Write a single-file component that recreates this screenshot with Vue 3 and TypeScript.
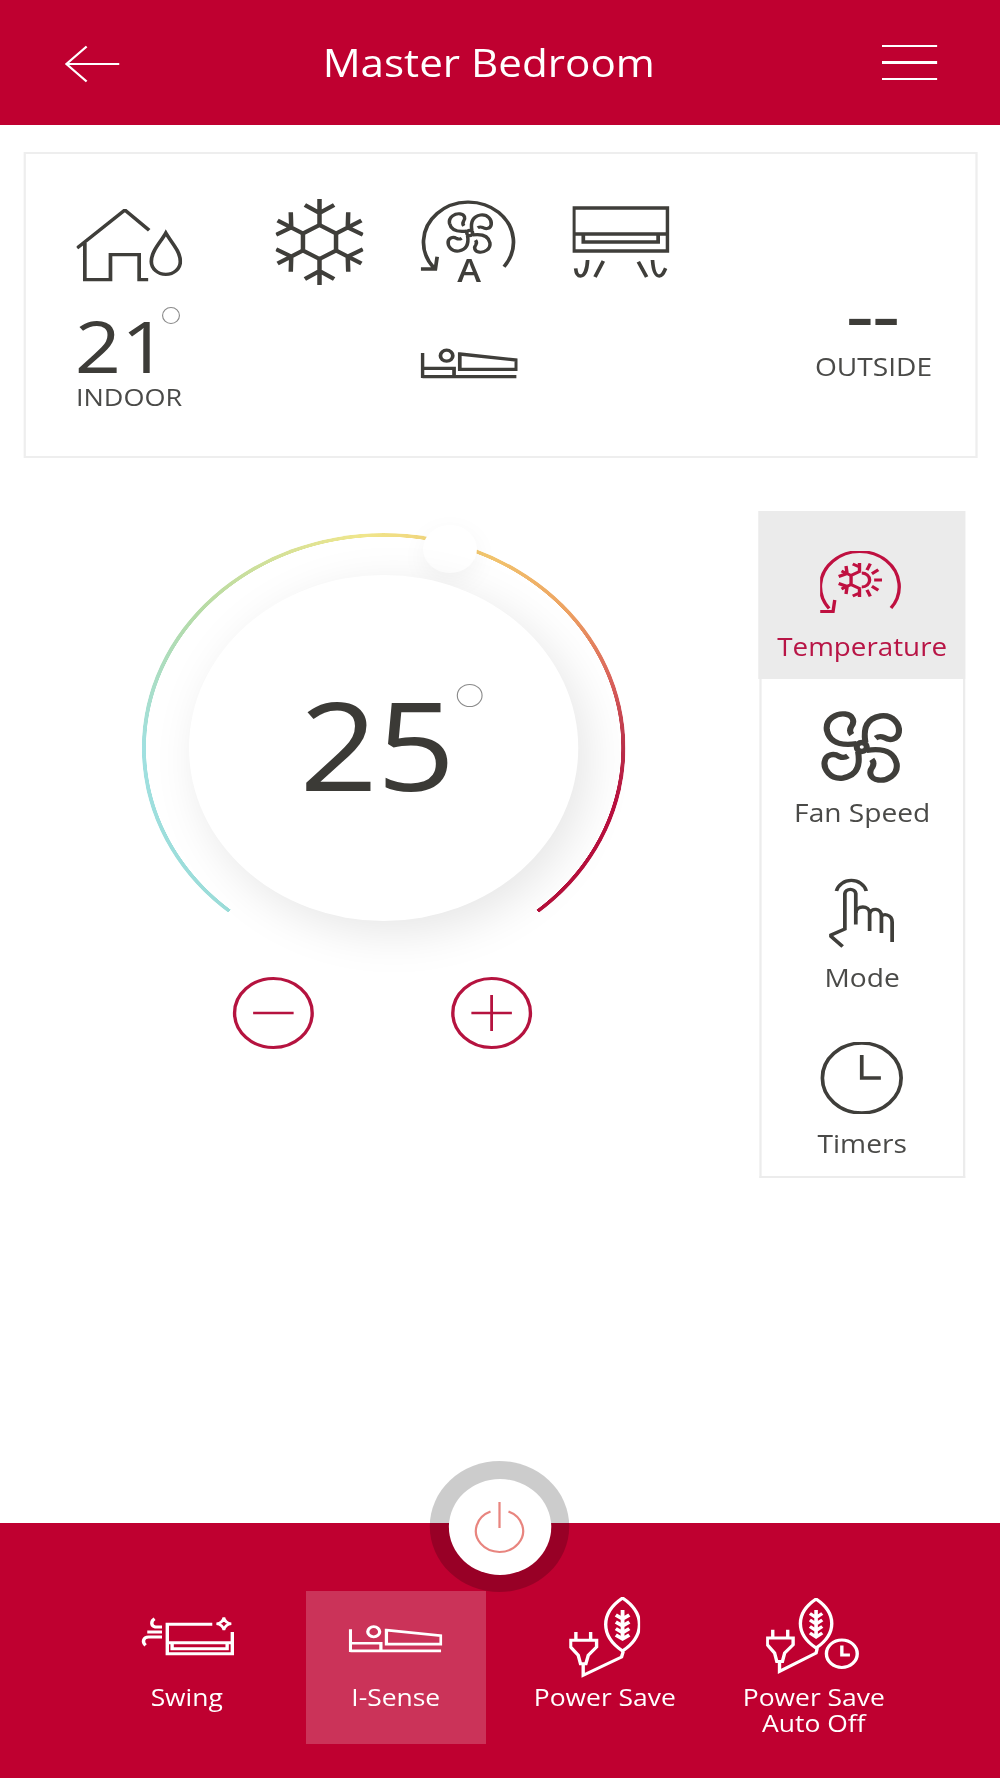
<template>
  <div class="app">
    <!-- shared icon parts -->
    <svg class="defs" width="0" height="0" aria-hidden="true">
      <defs>
        <g id="fan">
          <path
            v-for="a in quarters"
            :key="a"
            :transform="`rotate(${a})`"
            d="M-4.4 -3.3C-14.8 -1.7-28 -1.7-31 -16.7C-32.6 -28.3-22 -34-14.8 -33C-7.4 -32-5.9 -25-9.5 -20C-11 -17-10.5 -14.5-8.9 -12.3"
          />
          <circle r="4.5" />
        </g>
        <g id="bed">
          <path d="M1.5 8V33M1.5 31.7H85M1.5 23.3H29.6V31.7" />
          <circle cx="23" cy="10.7" r="5.5" />
          <path d="M34.7 9L85 15V24.3H34.7Z" />
        </g>
      </defs>
    </svg>

    <header class="topbar">
      <svg class="back" width="50" height="38" viewBox="0 0 50 38">
        <path d="M49 19H2M20 1.5L2 19L20 36.5" />
      </svg>
      <h1>Master Bedroom</h1>
      <div class="burger"><i></i><i></i><i></i></div>
    </header>

    <section class="status">
      <svg width="94" height="73" viewBox="0 0 94 73" class="c1 ico">
        <path d="M0.5 39L43 1L64.6 21.3M7.4 34V70.7H30.2V45.7H55.7V70.7H63.7" />
        <path d="M79.4 24C75 33 66.5 42 66.5 52.5A12.9 12.9 0 0 0 92.3 52.5C92.3 42 84 33 79.4 24Z" />
      </svg>
      <svg width="78" height="88" viewBox="-39 -44 78 88" class="ico flake">
        <path d="M0 -17L14.7 -8.5V8.5L0 17L-14.7 8.5V-8.5Z" />
        <g v-for="a in sixths" :key="a" :transform="`rotate(${a})`">
          <path d="M0 -17V-43M0 -29L-13 -37M0 -29L13 -37" />
        </g>
      </svg>
      <svg width="86" height="92" viewBox="0 0 86 92" class="ico fan-auto">
        <path d="M74 66.7A40 40 0 1 0 11.9 68M0 69H13L14.6 56.7" />
        <use href="#fan" transform="translate(43.5 33) scale(.58)" stroke-width="5.4" />
        <text x="43" y="82" text-anchor="middle" class="auto-a">A</text>
      </svg>
      <svg width="86" height="73" viewBox="0 0 86 73" class="ico unit">
        <path d="M1 2H84.4V45H1ZM1 28H84.4M9.5 28V36H76V28" />
        <path d="M13.3 54C13 62 11 70 7 70C4 70 3 66 2.7 62.3M27.3 55L19.9 71M58.4 55.7L65.8 71M71 54C71.5 62 73 70 77 70C80 70 81 66 82.7 62.3" />
      </svg>
      <div class="spacer"></div>
      <div class="empty"></div>

      <div class="indoor">
        <div class="temp">21<span class="deg"></span></div>
        <div class="cap">INDOOR</div>
      </div>
      <div></div>
      <svg width="86" height="34" viewBox="0 0 86 34" class="ico bed"><use href="#bed" /></svg>
      <div></div>
      <div></div>
      <div class="outside">
        <div class="dash">--</div>
        <div class="cap">OUTSIDE</div>
      </div>
    </section>

    <main class="control">
      <div class="dial-col">
        <div class="dial">
          <div class="ring"></div>
          <div class="knob"></div>
          <div class="face">
            <span class="set">25<span class="deg big"></span></span>
          </div>
        </div>
        <div class="steps">
          <button class="step">
            <svg width="38" height="38" viewBox="0 0 38 38"><path d="M1 19H37" /></svg>
          </button>
          <button class="step">
            <svg width="38" height="38" viewBox="0 0 38 38"><path d="M1 19H37M19 1V37" /></svg>
          </button>
        </div>
      </div>

      <nav class="side">
        <div class="side-item active">
          <svg width="74" height="62" viewBox="0 0 74 62" class="ico red">
            <path d="M63 57A35 35 0 1 0 8 57.5M0 60.5H11.5L13 49" />
            <g transform="translate(35 29)">
              <path d="M1 -9L-7.5 -4.5V4.5L1 9" />
              <path d="M0 -17V-9M0 9V17M-16 -9L-7.5 -4.5M-16 9L-7.5 4.5M-12 -14L-11 -6.5M-18.5 -3.5L-11 -6.5M-12 14L-11 6.5M-18.5 3.5L-11 6.5M-6 -16L0 -13M-6 16L0 13" />
              <path d="M2 -7A7 7 0 0 1 2 7" />
              <g v-for="a in sunRays" :key="a" transform="translate(2 0)">
                <path :transform="`rotate(${a})`" d="M0 -11V-18" />
              </g>
            </g>
          </svg>
          <span>Temperature</span>
        </div>
        <div class="side-item">
          <svg width="74" height="72" viewBox="-37 -36 74 72" class="ico">
            <use href="#fan" stroke-width="5.4" />
          </svg>
          <span>Fan Speed</span>
        </div>
        <div class="side-item">
          <svg width="58" height="72" viewBox="0 0 58 72" class="ico">
            <path d="M6.5 15A13.6 13.6 0 0 1 33 15" />
            <path d="M12 70.5L0.8 59.5L14 53V17.6A4.9 4.9 0 0 1 23.7 17.6V48.5" />
            <path d="M23.7 37C24 29 36 29 36 37V55M36 38C37 31 46.5 32 46.5 40V57M46.5 41C47 37 56 38 56 46V66" />
          </svg>
          <span>Mode</span>
        </div>
        <div class="side-item">
          <svg width="74" height="72" viewBox="0 0 74 72" class="ico">
            <circle cx="37" cy="36" r="35" />
            <path d="M37 13V36H54" />
          </svg>
          <span>Timers</span>
        </div>
      </nav>
    </main>

    <footer class="dock">
      <button class="power">
        <span class="power-in">
          <svg width="46" height="52" viewBox="0 0 46 52">
            <path d="M15 10.5A21 21 0 1 0 31 10.5M23 1V27" />
          </svg>
        </span>
      </button>
      <div v-for="item in dockItems" :key="item.id" class="dock-item" :class="{ on: item.on }">
        <div class="dock-ico">
          <svg v-if="item.id === 'swing'" width="83" height="40" viewBox="0 0 83 40">
            <path d="M63.7 7.3H23.7V36.7H81.5V15M23.7 25.7H81.5M28 25.7V31.7H76.9V25.7" />
            <path d="M74 0.5Q75 6 80.5 6.7Q75 7.6 74 13Q73 7.6 67.5 6.7Q73 6 74 0.5Z" stroke-width="2.4" />
            <path d="M12.4 1.7C9 4 9 9 13 10H19M5.9 15H19M4.4 28.3C1 25 2.5 20 7 20H19" />
          </svg>
          <svg v-else-if="item.id === 'sense'" width="83" height="31" viewBox="0 0 86 34" preserveAspectRatio="none">
            <use href="#bed" />
          </svg>
          <svg v-else-if="item.id === 'save'" width="63" height="81" viewBox="0 0 63 81">
            <path d="M47.4 1C67.4 16 67.4 39 47.4 54C27.4 39 27.4 16 47.4 1Z" />
            <path d="M47.4 13V43M41.4 18L47.4 22L53.4 18M41.4 25L47.4 29L53.4 25M41.4 31.7L47.4 35.7L53.4 31.7M41.4 38L47.4 42L53.4 38" stroke-width="3.4" />
            <path d="M12.4 66.7V78.3L46.5 60L48 54.3" />
            <path d="M5.9 35V43.3M19 35V43.3M1.2 43.3H24.3V50L16.9 58.3L14.8 66.7H10L8 58.3L1.2 50Z" />
          </svg>
          <svg v-else width="84" height="78" viewBox="0 0 84 78">
            <path d="M44.4 1C63 15 63 36 44.4 50C25.8 36 25.8 15 44.4 1Z" />
            <path d="M44.4 12V40M38.9 15.5L44.4 19.5L49.9 15.5M38.9 22L44.4 26L49.9 22M38.9 28.5L44.4 32.5L49.9 28.5M38.9 35L44.4 39L49.9 35" stroke-width="3.2" />
            <path d="M11.9 63.4V73.4L44.4 55L45.5 50" />
            <path d="M5.9 31.7V40M19.2 31.7V40M1 40H24V46.7L16.5 55L14.5 63.4H9.5L7.5 55L1 46.7Z" />
            <circle cx="67.3" cy="55.7" r="13.7" />
            <path d="M67.3 47.5V57H74.5" />
          </svg>
        </div>
        <span v-for="line in item.label" :key="line" class="dock-label">{{ line }}</span>
      </div>
    </footer>
  </div>
</template>

<script setup lang="ts">
interface DockItem {
  id: string;
  label: string[];
  on?: boolean;
}

const quarters: number[] = [0, 90, 180, 270];
const sixths: number[] = [0, 60, 120, 180, 240, 300];
const sunRays: number[] = [25, 55, 90, 125, 155];

const dockItems: DockItem[] = [
  { id: "swing", label: ["Swing"] },
  { id: "sense", label: ["I-Sense"], on: true },
  { id: "save", label: ["Power Save"] },
  { id: "auto", label: ["Power Save", "Auto Off"] },
];
</script>

<style>
html,
body {
  margin: 0;
  overflow: hidden;
  background: #fff;
}
</style>

<style scoped>
/* the source capture is a 1:2 phone screen stretched sideways to 9:16 */
.app {
  width: 888.89px;
  height: 1778px;
  transform: scaleX(1.125);
  transform-origin: 0 0;
  display: flex;
  flex-direction: column;
  font-family: "Open Sans", "Noto Sans", sans-serif;
  color: #4a4a48;
  background: #fff;
}
.defs {
  position: absolute;
}
svg {
  display: block;
  fill: none;
  stroke: currentColor;
  stroke-width: 3;
}
.ico {
  color: #3f3e3a;
  stroke-width: 3.3;
}
.flake {
  stroke-width: 4;
}
.fan-auto {
  align-self: start;
  margin-top: 2.5px;
}
.unit {
  margin-left: 2px;
}
.red {
  color: #bf1040;
  stroke-width: 3;
}
.topbar {
  height: 124.5px;
  flex: none;
  background: #bf0030;
  color: #fff;
  display: flex;
  align-items: center;
  justify-content: space-between;
  padding: 0 56px 0 57px;
  box-sizing: border-box;
}
.topbar h1 {
  margin: 0;
  font-size: 37.5px;
  font-weight: 400;
  line-height: 1;
  position: relative;
  left: -11px;
}
.back {
  stroke-width: 2;
  margin-top: 4px;
}
.burger {
  width: 49px;
  display: flex;
  flex-direction: column;
  gap: 14px;
}
.burger i {
  display: block;
  height: 2.5px;
  background: #fff;
}
.status {
  flex: none;
  box-sizing: border-box;
  height: 306px;
  width: 848px;
  margin: 27.5px 0 0 20.5px;
  border: 2.5px solid #eeeeee;
  padding: 43px 14px 0 45px;
  display: grid;
  grid-template-columns: 170px 92px 174px 95px 1fr 152px;
  grid-template-rows: 90px auto;
  justify-items: center;
  align-items: center;
}
.c1 {
  justify-self: start;
  margin-top: 6px;
}
.indoor {
  justify-self: start;
  align-self: start;
  margin-top: 22px;
}
.temp {
  position: relative;
  font-size: 72px;
  line-height: 72px;
  color: #3d3c38;
  width: 94px;
  margin-bottom: 1px;
  margin-left: -1px;
}
.deg {
  position: absolute;
  left: 77px;
  top: -2.5px;
  width: 16px;
  height: 17px;
  border: 1.5px solid #8a8a8a;
  border-radius: 50%;
  box-sizing: border-box;
}
.cap {
  font-size: 24px;
  line-height: 30px;
  color: #4a4a48;
}
.bed {
  align-self: start;
  margin-top: 57.5px;
}
.outside {
  text-align: center;
  align-self: start;
  margin-top: 13.5px;
}
.outside .cap {
  font-size: 25px;
  margin-top: 20px;
}
.dash {
  font-size: 50px;
  font-weight: 700;
  line-height: 30px;
  color: #3d3c38;
  transform: scaleX(1.45);
}
.control {
  flex: 1;
  display: flex;
  align-items: flex-start;
  padding: 54px 31px 0 126px;
}
.dial-col {
  padding-top: 21px;
  display: flex;
  flex-direction: column;
  align-items: center;
}
.dial {
  position: relative;
  width: 430px;
  height: 430px;
}
.ring {
  position: absolute;
  inset: 0;
  border-radius: 50%;
  background: conic-gradient(
    from 220deg,
    #9adcd8 0deg,
    #a0e0e0 50deg,
    #b6dba6 90deg,
    #f0e68c 135deg,
    #f2c66e 165deg,
    #eda262 190deg,
    #d9605a 212deg,
    #b9304a 230deg,
    #b9103f 245deg,
    #b5103a 280deg,
    transparent 280deg
  );
  -webkit-mask: radial-gradient(closest-side, transparent calc(100% - 4px), #000 calc(100% - 3.5px));
  mask: radial-gradient(closest-side, transparent calc(100% - 4px), #000 calc(100% - 3.5px));
}
.knob {
  position: absolute;
  left: 250px;
  top: -8px;
  width: 48px;
  height: 48px;
  border-radius: 50%;
  background: #fff;
  box-shadow: 0 8px 24px rgba(0, 0, 0, 0.05);
}
.face {
  position: absolute;
  left: 42px;
  top: 42px;
  width: 346px;
  height: 346px;
  border-radius: 50%;
  background: #fff;
  box-shadow: 9px 12px 44px rgba(0, 0, 0, 0.1);
  display: flex;
  align-items: center;
  justify-content: center;
}
.set {
  position: relative;
  font-size: 122px;
  font-weight: 500;
  line-height: 130px;
  color: #3b3a36;
  margin: -9px 0 0 -12px;
  letter-spacing: -1px;
}
.deg.big {
  left: 139.5px;
  top: 5px;
  width: 23px;
  height: 23px;
}
.steps {
  display: flex;
  gap: 122px;
  margin-top: 14px;
  margin-left: -2px;
}
.step {
  width: 72px;
  height: 72px;
  padding: 0;
  border-radius: 50%;
  border: 3px solid #b5133f;
  background: #fff;
  color: #b5133f;
  display: flex;
  align-items: center;
  justify-content: center;
}
.step svg {
  stroke-width: 2.5;
}
.side {
  margin-left: auto;
  margin-top: -1px;
  width: 183px;
  box-sizing: border-box;
  border: 2.5px solid #ececec;
  border-top: 0;
  display: flex;
  flex-direction: column;
}
.side-item {
  height: 165.7px;
  box-sizing: border-box;
  padding-top: 31.5px;
  display: flex;
  flex-direction: column;
  align-items: center;
  font-size: 25px;
  line-height: 30px;
  color: #4a4a48;
}
.side-item svg {
  margin-bottom: 14px;
}
.side-item.active {
  height: 168px;
  margin: 0 -2.5px;
  background: #ebebeb;
  color: #b81546;
  padding-top: 40px;
  font-size: 24.7px;
}
.side-item.active svg {
  margin-bottom: 19px;
}
.dock {
  position: relative;
  flex: none;
  height: 255px;
  box-sizing: border-box;
  background: #bf0030;
  color: #fff;
  padding: 68px 0 0 86px;
  display: flex;
  align-items: flex-start;
  gap: 25.8px;
}
.power {
  position: absolute;
  left: 50%;
  top: -62px;
  transform: translateX(-50%);
  width: 124px;
  height: 131px;
  padding: 0;
  border: 0;
  border-radius: 50%;
  background: rgba(0, 0, 0, 0.2);
  display: flex;
  align-items: center;
  justify-content: center;
}
.power-in {
  width: 91px;
  height: 96px;
  border-radius: 50%;
  background: #fff;
  color: #e8857f;
  display: flex;
  align-items: center;
  justify-content: center;
}
.power-in svg {
  stroke-width: 2;
}
.dock-item {
  width: 160px;
  height: 153px;
  box-sizing: border-box;
  padding-top: 4px;
  display: flex;
  flex-direction: column;
  align-items: center;
}
.dock-item.on {
  background: rgba(255, 255, 255, 0.2);
}
.dock-ico {
  height: 84px;
  display: flex;
  align-items: center;
  margin-bottom: 5px;
}
.dock-label {
  font-size: 23.5px;
  line-height: 26px;
  white-space: nowrap;
}
.auto-a {
  font-size: 32px;
  font-weight: 600;
  fill: currentColor;
  stroke: none;
}
</style>
